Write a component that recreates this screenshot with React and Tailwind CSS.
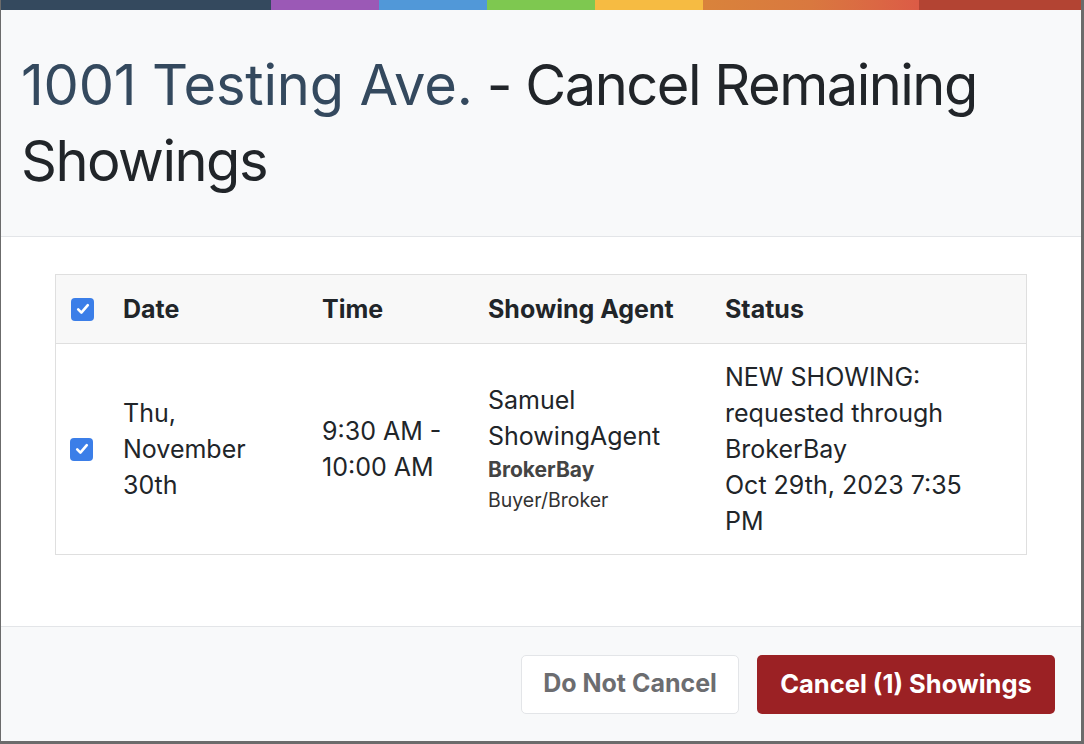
export default function App() {
  const font = { fontFamily: "Inter, 'Noto Sans', sans-serif" };
  return (
    <div className="w-[1084px] h-[744px] bg-[#6b6b6b] overflow-hidden" style={font}>
      <div className="ml-[1px] w-[1080px] h-[741px] flex flex-col bg-white">
        <div className="flex h-[10px] shrink-0">
          <div className="w-[270px] bg-[#34495e]" />
          <div className="w-[108px] bg-[#9b59b6]" />
          <div className="w-[108px] bg-[#5198d8]" />
          <div className="w-[108px] bg-[#7ec850]" />
          <div className="w-[108px] bg-[#f6bb42]" />
          <div className="w-[216px] bg-gradient-to-r from-[#d9833b] via-[#d9783f] to-[#dc5b46]" />
          <div className="flex-1 bg-[#b34433]" />
        </div>
        <div className="bg-[#f8f9fa] border-b border-[#e3e5e8] h-[227px] shrink-0 flex items-center px-[20px]">
          <h1 className="text-[56px] leading-[76px] font-normal text-[#212529] tracking-[-1.5px]">
            <span className="text-[#34495e] tracking-[-0.2px]">1001 Testing Ave.</span> - Cancel Remaining Showings
          </h1>
        </div>
        <div className="flex-1 bg-white pt-[37px] px-[54px]">
          <div className="border border-[#dfdfdf] text-[25px] leading-[36px] text-[#212529]">
            <div className="flex bg-[#f8f8f8] border-b border-[#dfdfdf] font-bold py-4">
              <div className="w-[67px] pl-[15px] flex items-center">
                <Check />
              </div>
              <div className="w-[199px]">Date</div>
              <div className="w-[166px]">Time</div>
              <div className="w-[237px]">Showing Agent</div>
              <div className="flex-1">Status</div>
            </div>
            <div className="flex items-center py-[15px]">
              <div className="w-[67px] pl-[14px] flex items-center">
                <Check />
              </div>
              <div className="w-[199px]">
                Thu,
                <br />
                November
                <br />
                30th
              </div>
              <div className="w-[166px]">
                9:30 AM -
                <br />
                10:00 AM
              </div>
              <div className="w-[237px]">
                <div>Samuel</div>
                <div>ShowingAgent</div>
                <div className="text-[21px] leading-[31px] font-bold text-[#444]">BrokerBay</div>
                <div className="text-[19.5px] leading-[31px] text-[#333]">Buyer/Broker</div>
              </div>
              <div className="flex-1">
                NEW SHOWING:
                <br />
                requested through
                <br />
                BrokerBay
                <br />
                Oct 29th, 2023 7:35
                <br />
                PM
              </div>
            </div>
          </div>
        </div>
        <div className="h-[115px] shrink-0 bg-[#f8f9fa] border-t border-[#e3e5e8] flex items-center justify-end gap-[18px] pr-[26px]">
          <button className="h-[59px] w-[218px] rounded-[5px] bg-white border border-[#e3e5e8] text-[#6c6d70] text-[25px] font-bold">
            Do Not Cancel
          </button>
          <button className="h-[59px] w-[298px] rounded-[5px] bg-[#9b2124] text-white text-[25.5px] font-bold">
            Cancel (1) Showings
          </button>
        </div>
      </div>
    </div>
  );
}

function Check() {
  return (
    <div className="w-[23px] h-[23px] rounded-[4px] bg-[#3b7ee8] flex items-center justify-center">
      <svg width="16" height="16" viewBox="0 0 16 16">
        <path d="M3.2 8.4 L6.4 11.6 L12.8 4.2" stroke="white" strokeWidth="2.6" fill="none" strokeLinecap="round" strokeLinejoin="round" />
      </svg>
    </div>
  );
}
